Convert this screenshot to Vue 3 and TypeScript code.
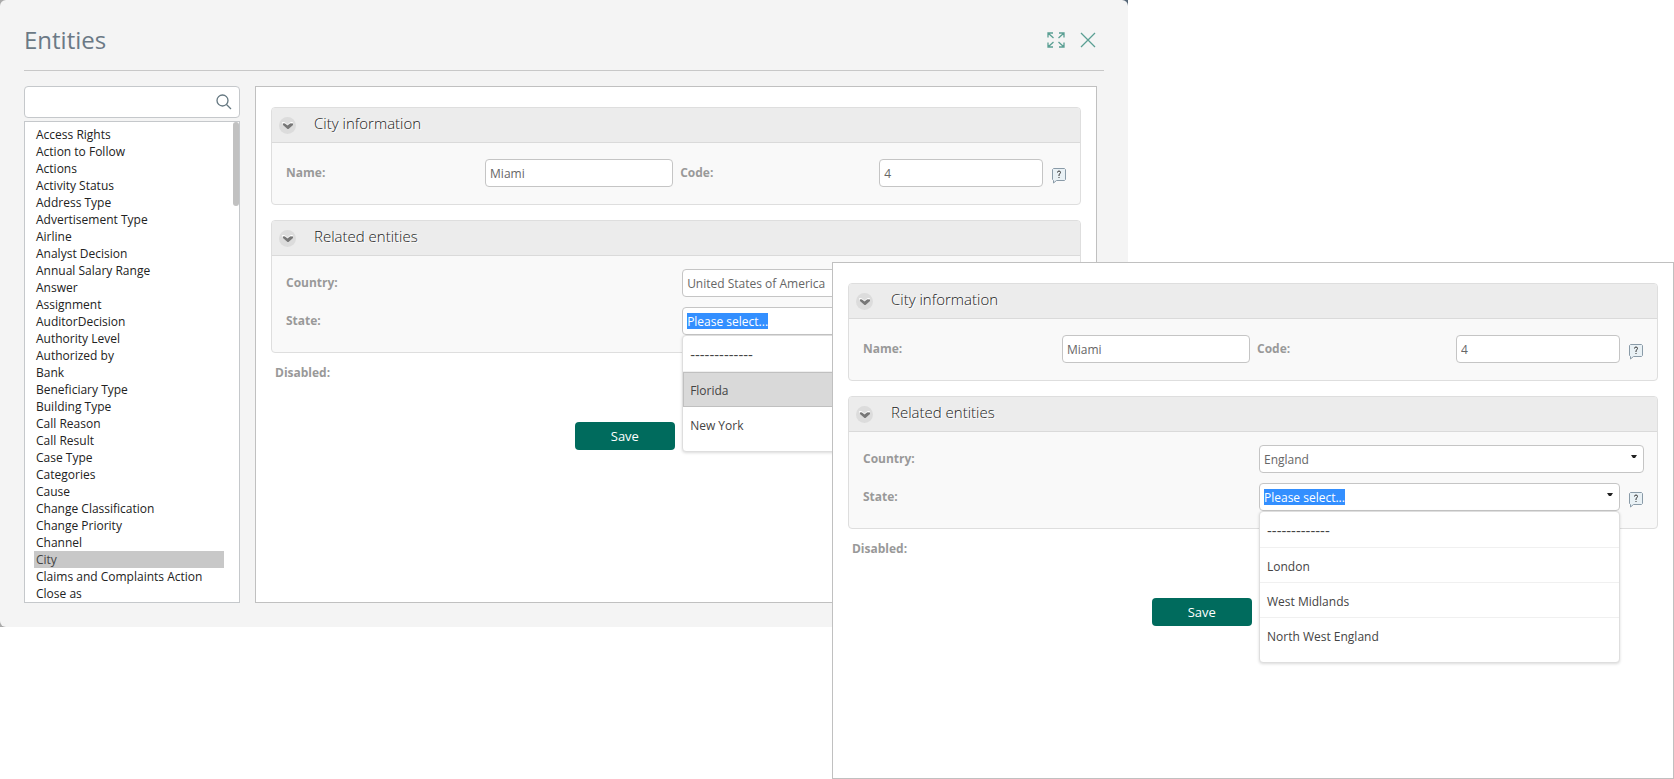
<script setup lang="ts">
import { ref } from 'vue'

interface Pane {
  id: string
  floating: boolean
  name: string
  code: string
  country: string
  states: string[]
  active: string
}

const entities: string[] = [
  'Access Rights', 'Action to Follow', 'Actions', 'Activity Status', 'Address Type',
  'Advertisement Type', 'Airline', 'Analyst Decision', 'Annual Salary Range', 'Answer',
  'Assignment', 'AuditorDecision', 'Authority Level', 'Authorized by', 'Bank',
  'Beneficiary Type', 'Building Type', 'Call Reason', 'Call Result', 'Case Type',
  'Categories', 'Cause', 'Change Classification', 'Change Priority', 'Channel', 'City',
  'Claims and Complaints Action', 'Close as',
]

const selected = ref('City')
const query = ref('')

const panes = ref<Pane[]>([
  {
    id: 'usa',
    floating: false,
    name: 'Miami',
    code: '4',
    country: 'United States of America',
    states: ['-------------', 'Florida', 'New York'],
    active: 'Florida',
  },
  {
    id: 'eng',
    floating: true,
    name: 'Miami',
    code: '4',
    country: 'England',
    states: ['-------------', 'London', 'West Midlands', 'North West England'],
    active: '',
  },
])
</script>

<template>
  <div class="desktop">
    <div class="backdrop">
      <section class="dialog">
        <header class="titlebar">
          <h1>Entities</h1>
          <div class="tools">
            <button type="button" aria-label="Expand">
              <svg width="18" height="16" viewBox="0 0 18 16">
                <path d="M1 5.500V1h5M1 1l5.500 5M12 1h5v4.500M17 1l-5.500 5M1 10.500V15h5M1 15l5.500-5M12 15h5v-4.500M17 15l-5.500-5" />
              </svg>
            </button>
            <button type="button" aria-label="Close">
              <svg width="16" height="16" viewBox="0 0 16 16">
                <path d="M1 1l14 14M15 1L1 15" />
              </svg>
            </button>
          </div>
        </header>

        <div class="content">
          <aside class="sidebar">
            <div class="search">
              <input v-model="query" type="text" aria-label="Search entities" />
              <svg width="16" height="16" viewBox="0 0 16 16">
                <circle cx="6.500" cy="6.500" r="5.500" />
                <path d="M10.500 10.500l4.500 4.500" />
              </svg>
            </div>
            <div class="list">
              <ul>
                <li v-for="item in entities" :key="item">
                  <button type="button" :class="{ chosen: item === selected }" @click="selected = item">{{ item }}</button>
                </li>
              </ul>
              <span class="thumb"></span>
            </div>
          </aside>

          <form
            v-for="pane in panes"
            :key="pane.id"
            class="pane"
            :class="{ floating: pane.floating }"
            @submit.prevent
          >
            <section class="group">
              <header class="group-head">
                <button type="button" class="toggle" aria-label="Collapse city information">
                  <svg width="17" height="17" viewBox="0 0 17 17">
                    <path class="shine" d="M3.500 6.500v-1h2l3 2.500 3-2.500h2v1" />
                    <path class="arrow" d="M4 6.500h2l2.500 2 2.500-2h3v1.500L9.500 12h-1L4 8z" />
                  </svg>
                </button>
                <h2>City information</h2>
              </header>
              <div class="info">
                <label :for="pane.id + '-name'">Name:</label>
                <input :id="pane.id + '-name'" v-model="pane.name" class="field" type="text" />
                <label class="second" :for="pane.id + '-code'">Code:</label>
                <input :id="pane.id + '-code'" v-model="pane.code" class="field" type="text" />
                <button type="button" class="help" aria-label="Help for code">
                  <svg width="15" height="16" viewBox="0 0 15 16">
                    <path class="bubble" d="M1.500.5h11l1 1v10l-1 1H4.500L1.500 15v-2.500l-1-1v-10z" />
                    <path class="mark" d="M5.500 4.500Q5.500 3 7 3t1.500 1.500Q8.500 5.500 7 6.500V8M7 9v1" />
                  </svg>
                </button>
              </div>
            </section>

            <section class="group">
              <header class="group-head">
                <button type="button" class="toggle" aria-label="Collapse related entities">
                  <svg width="17" height="17" viewBox="0 0 17 17">
                    <path class="shine" d="M3.500 6.500v-1h2l3 2.500 3-2.500h2v1" />
                    <path class="arrow" d="M4 6.500h2l2.500 2 2.500-2h3v1.500L9.500 12h-1L4 8z" />
                  </svg>
                </button>
                <h2>Related entities</h2>
              </header>
              <div class="related">
                <label :for="pane.id + '-country'">Country:</label>
                <div class="combo">
                  <select :id="pane.id + '-country'" class="field">
                    <option>{{ pane.country }}</option>
                  </select>
                  <svg class="caret" width="6" height="3" viewBox="0 0 6 3"><path d="M0 0h6L4 3H2z" /></svg>
                </div>
                <label :for="pane.id + '-state'">State:</label>
                <div class="with-help">
                  <div class="combo">
                    <select :id="pane.id + '-state'" class="field marked">
                      <option>Please select...</option>
                    </select>
                    <svg class="caret" width="6" height="3" viewBox="0 0 6 3"><path d="M0 0h6L4 3H2z" /></svg>
                    <ul class="menu" role="listbox" aria-label="State">
                      <li
                        v-for="state in pane.states"
                        :key="state"
                        role="option"
                        :aria-selected="state === pane.active"
                        :class="{ active: state === pane.active }"
                      >{{ state }}</li>
                    </ul>
                  </div>
                  <button type="button" class="help" aria-label="Help for state">
                    <svg width="15" height="16" viewBox="0 0 15 16">
                      <path class="bubble" d="M1.500.5h11l1 1v10l-1 1H4.500L1.500 15v-2.500l-1-1v-10z" />
                      <path class="mark" d="M5.500 4.500Q5.500 3 7 3t1.500 1.500Q8.500 5.500 7 6.500V8M7 9v1" />
                    </svg>
                  </button>
                </div>
              </div>
            </section>

            <div class="disabled">
              <label :for="pane.id + '-disabled'">Disabled:</label>
              <input :id="pane.id + '-disabled'" type="checkbox" />
            </div>
            <button type="submit" class="save">Save</button>
          </form>
        </div>
      </section>
    </div>
  </div>
</template>

<style>
body {
  margin: 0;
  background: #fff;
}
</style>

<style scoped>
.desktop {
  position: relative;
  min-height: 100vh;
  font: 12px/17px "Open Sans", "Noto Sans", sans-serif;
  color: #333;
}
.desktop *,
.desktop *::before {
  box-sizing: border-box;
}
button,
input,
select {
  font: inherit;
  color: inherit;
  margin: 0;
}
button {
  border: 0;
  padding: 0;
  background: none;
  cursor: pointer;
}
svg {
  display: block;
}
ul {
  list-style: none;
  margin: 0;
  padding: 0;
}
.backdrop {
  width: 67.4%;
  background: linear-gradient(90deg, #aaa, #567);
}
.dialog {
  padding: 0 24px 24px;
  background: #f4f4f4;
  border-radius: 6px 6px 0 6px;
}
.titlebar {
  display: flex;
  justify-content: space-between;
  align-items: center;
  height: 71px;
  padding: 9px 8px 0 0;
  border-bottom: 1px solid #c8c8c8;
}
h1 {
  margin: 0;
  font-size: 24px;
  line-height: 32px;
  font-weight: 400;
  color: #6b7985;
}
.tools {
  display: flex;
  gap: 15px;
}
.tools svg {
  fill: none;
  stroke: #5a9f93;
  stroke-width: 1.300;
}
.content {
  display: flex;
  gap: 15px;
  padding: 15px 7px 0 0;
}
.sidebar {
  flex: 0 0 216px;
}
.search {
  display: flex;
  align-items: center;
  height: 32px;
  margin-bottom: 3px;
  padding: 0 7px 0 4px;
  border: 1px solid #c5c8cb;
  border-radius: 4px;
  background: #fff;
}
.search input {
  flex: 1;
  min-width: 0;
  border: 0;
  outline: 0;
  background: none;
}
.search svg {
  fill: none;
  stroke: #647780;
  stroke-width: 1.300;
}
.list {
  position: relative;
  padding: 4px 15px 0 9px;
  border: 1px solid #c5c8cb;
  background: #fff;
}
.list button {
  display: block;
  width: 100%;
  padding: 0 2px;
  line-height: 17px;
  text-align: left;
  white-space: nowrap;
  color: #222;
}
.list .chosen {
  background: #c8c8c8;
  color: #444;
}
.thumb {
  position: absolute;
  top: 0;
  right: 0;
  width: 6px;
  height: 84px;
  border-radius: 3px;
  background: #c1c1c1;
}
.pane {
  flex: 1;
  min-width: 0;
  min-height: 517px;
  padding: 20px 15px;
  border: 1px solid #c0c0c0;
  background: #fff;
}
.floating {
  position: absolute;
  z-index: 10;
  top: 262px;
  right: 0;
  width: 50.3%;
}
.group {
  margin-bottom: 15px;
  border: 1px solid #dedede;
  border-radius: 4px;
  background: #f9f9f9;
}
.group-head {
  display: flex;
  align-items: center;
  gap: 18px;
  height: 35px;
  padding-left: 7px;
  border-bottom: 1px solid #dadada;
  border-radius: 3px 3px 0 0;
  background: #ececec;
}
h2 {
  margin: 0;
  padding-bottom: 4px;
  font-size: 15px;
  line-height: 20px;
  font-weight: 300;
  color: #222;
  text-shadow: 1px 1px 0 #fff;
}
.toggle {
  border-radius: 50%;
  background: #dcdcdc;
}
.shine {
  fill: none;
  stroke: #fff;
}
.arrow {
  fill: #777;
}
.info {
  display: grid;
  grid-template-columns: 199fr 188fr 206fr 164fr 24px;
  padding: 16px 13px 17px 14px;
}
.related {
  display: grid;
  grid-template-columns: 396fr 385fr;
  row-gap: 10px;
  padding: 13px 13px 17px 14px;
}
label {
  font-weight: 700;
  line-height: 28px;
  color: #999;
}
.second {
  padding-left: 7px;
}
.field {
  display: block;
  width: 100%;
  min-width: 0;
  height: 28px;
  padding: 0 4px;
  border: 1px solid #c5c5c5;
  border-radius: 4px;
  outline: 0;
  appearance: none;
  background: #fff;
  color: #666;
}
.marked {
  background: linear-gradient(#338fff, #338fff) 4px 5px / 81px 16px no-repeat #fff;
  color: #fff;
}
.help {
  align-self: start;
  margin: 9px 0 0 9px;
}
.bubble {
  fill: #e9f1f5;
  stroke: #8a9ba8;
}
.mark {
  fill: none;
  stroke: #333;
}
.combo {
  position: relative;
  flex: 1;
  min-width: 0;
}
.with-help {
  display: flex;
}
.caret {
  position: absolute;
  top: 10px;
  right: 7px;
  fill: #222;
  pointer-events: none;
}
.menu {
  position: absolute;
  z-index: 5;
  top: 28px;
  left: 0;
  right: 0;
  padding: 1px 0 9px;
  border: 1px solid #dedede;
  border-radius: 4px;
  background: #fff;
  box-shadow: 0 1px 3px rgba(0, 0, 0, 0.15);
}
.menu li {
  height: 35px;
  padding: 2px 7px 0;
  line-height: 34px;
  border-bottom: 1px solid #f0f0f0;
  color: #444;
}
.menu li:first-child {
  padding-top: 0;
  font-size: 15px;
}
.menu li:last-child {
  border-bottom: 0;
}
.menu .active {
  padding: 1px 6px 0;
  border: 1px solid #c0c0c0;
  background: #d9d9d9;
}
.disabled {
  display: grid;
  grid-template-columns: 51% 1fr;
  align-items: center;
  justify-items: start;
  margin: -9px 0 35px 4px;
}
.save {
  display: block;
  width: 100px;
  height: 28px;
  margin-left: 37.5%;
  border-radius: 4px;
  background: #006b5d;
  color: #fff;
  font-size: 13px;
}
</style>
